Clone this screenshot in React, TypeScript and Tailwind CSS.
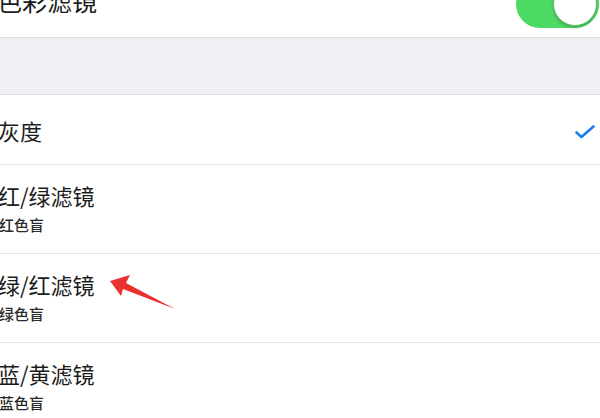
const font = { fontFamily: '"Noto Sans CJK SC", "Noto Sans", sans-serif' };

const filters = [
  { title: '红/绿滤镜', sub: '红色盲' },
  { title: '绿/红滤镜', sub: '绿色盲' },
  { title: '蓝/黄滤镜', sub: '蓝色盲' },
];

export default function App() {
  return (
    <div className="relative w-[600px] h-[418px] overflow-hidden bg-white" style={font}>
      {/* top row: 色彩滤镜 toggle */}
      <div className="flex h-[38px] items-start justify-between overflow-hidden border-b border-[#dedee2]">
        <span className="-ml-[3px] -mt-[12px] text-[25px] leading-[25px] text-[#1c1c1c]">色彩滤镜</span>
        <div className="-mt-[20px] mr-[1px] flex h-[48px] w-[83px] items-center justify-end rounded-full bg-[#4cd964]">
          <div className="mr-[2px] h-[44px] w-[44px] rounded-full border border-[#5fbf6d] bg-white shadow-[0_2px_3px_rgba(0,0,0,0.2)]" />
        </div>
      </div>

      {/* group gap */}
      <div className="h-[57px] border-b border-[#dedee2] bg-[#efeff4]" />

      {/* 灰度 */}
      <div className="flex h-[70px] items-center justify-between border-b border-[#e4e4e6] pr-[5px]">
        <span className="-ml-[2px] text-[22px] leading-[22px] text-[#1c1c1c]">灰度</span>
        <svg width="20" height="14" viewBox="0 0 20 14" className="mt-[5px]">
          <polyline points="1.5,7.5 6.5,12 18.5,1.5" fill="none" stroke="#1a7ef2" strokeWidth="2.6" strokeLinecap="round" strokeLinejoin="round" />
        </svg>
      </div>

      {filters.map((f) => (
        <div key={f.title} className="flex h-[89px] flex-col gap-[11px] border-b border-[#e4e4e6] pt-[19px]">
          <span className="-ml-[2px] text-[22px] leading-[22px] text-[#1c1c1c]">{f.title}</span>
          <span className="-ml-[1px] text-[15px] leading-[15px] font-medium text-[#2a2a2a]">{f.sub}</span>
        </div>
      ))}

      {/* red annotation arrow */}
      <svg className="absolute left-0 top-0" width="600" height="418" viewBox="0 0 600 418">
        <polygon points="110,281 130,275 126,283 175,309 123,289 121,296" fill="#e8322f" />
      </svg>
    </div>
  );
}
